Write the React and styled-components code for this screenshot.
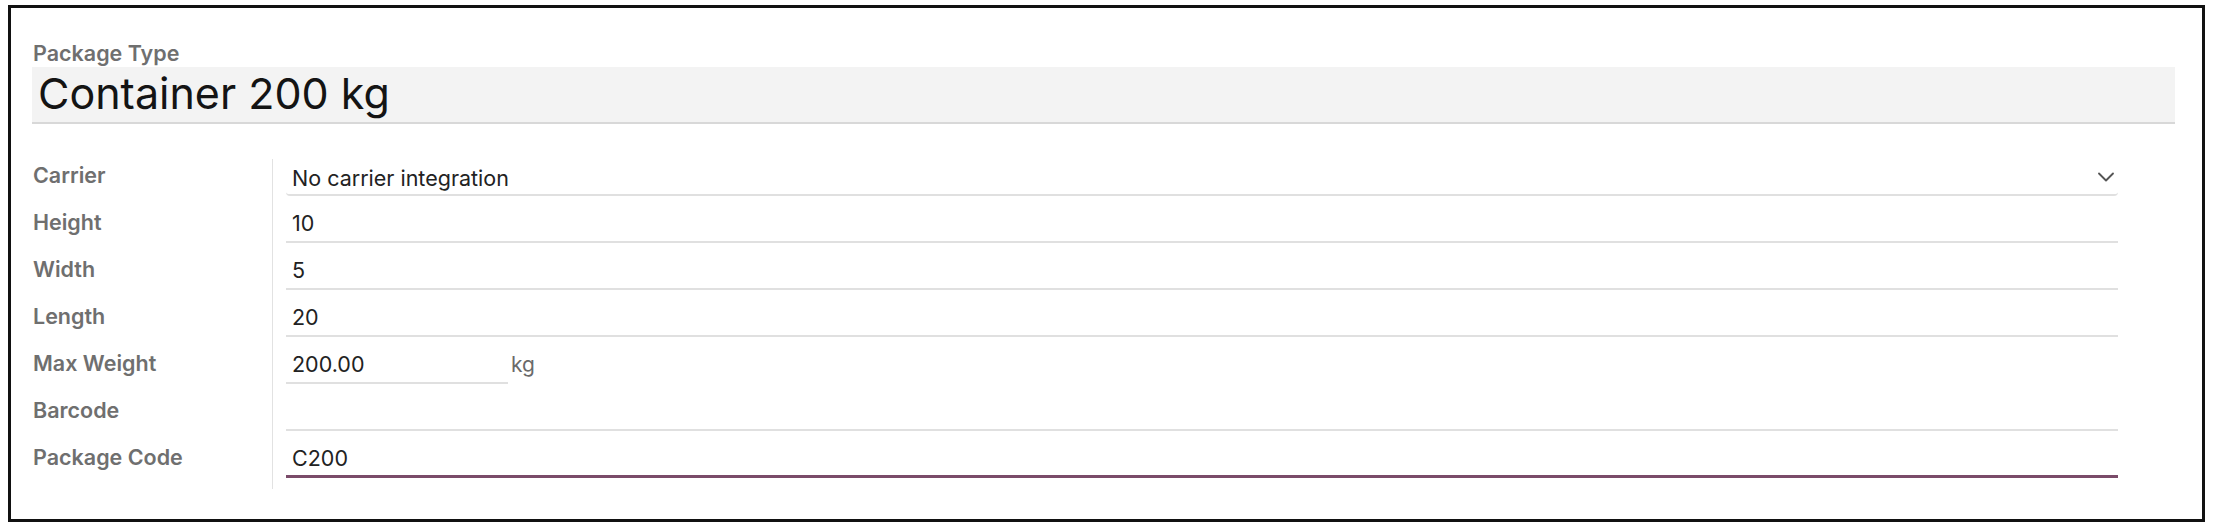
import React from 'react';
import styled, { createGlobalStyle } from 'styled-components';
import { ChevronDown } from 'lucide-react';

const Global = createGlobalStyle`
  body {
    margin: 0;
    background: #ffffff;
    font-family: "Inter", "Noto Sans", sans-serif;
  }
`

const Frame = styled.section`
    box-sizing: border-box;
    height: 517px;
    margin: 5px 13px 10px 8px;
    border: 3px solid #111111;
    padding: 33px 27px 0 21px;
    background: #ffffff;
`

const TitleLabel = styled.div`
    padding-left: 1px;
    margin-bottom: 2px;
    font-size: 21.5px;
    font-weight: 600;
    line-height: 24px;
    color: #6f6f6f;
`

const TitleBox = styled.div`
    box-sizing: border-box;
    height: 57px;
    padding: 0 0 2px 6px;
    background: #f3f3f3;
    border-bottom: 2px solid #d8d8d8;
    font-size: 43px;
    line-height: 53px;
    color: #141414;
`

const Form = styled.div`
    display: grid;
    grid-template-columns: 240px 1fr;
    grid-template-rows: 37px repeat(5, 47px) 58px;
    margin-top: 35px;
`

const Label = styled.div`
    padding-top: ${p => p.$first ? 4 : 14}px;
    padding-left: 1px;
    font-size: 21.5px;
    font-weight: 600;
    line-height: 24px;
    color: #6f6f6f;
`

const Cell = styled.div`
    display: flex;
    align-items: flex-start;
    padding: ${p => p.$first ? 0 : 10}px 57px 0 13px;
    border-left: 1px solid #e2e2e2;
`

const Input = styled.div`
    box-sizing: border-box;
    display: flex;
    align-items: flex-start;
    justify-content: space-between;
    width: ${p => p.$width || '100%'};
    height: 37px;
    padding: ${p => p.$select ? 2 : 0}px 0 0 6px;
    border-bottom: ${p => p.$focused ? '3px solid #7a4b69' : '2px solid #e0e0e0'};
    border-radius: ${p => p.$select ? '0 0 4px 4px' : '0'};
    font-size: 21.5px;
    line-height: 35px;
    color: #222222;
`

const Unit = styled.span`
    margin-left: 3px;
    font-size: 21px;
    line-height: 35px;
    color: #6a6a6a;
`

const Chevron = styled(ChevronDown)`
    flex: none;
    margin: 2px -2px 0 0;
    color: #555555;
`

const rows = [
    { label: 'Carrier', value: 'No carrier integration', select: true },
    { label: 'Height', value: '10' },
    { label: 'Width', value: '5' },
    { label: 'Length', value: '20' },
    { label: 'Max Weight', value: '200.00', width: '222px', unit: 'kg' },
    { label: 'Barcode', value: '' },
    { label: 'Package Code', value: 'C200', focused: true },
];

const App = () => {
    return (
        <>
            <Global />
            <Frame>
                <TitleLabel>Package Type</TitleLabel>
                <TitleBox>Container 200 kg</TitleBox>
                <Form>
                    {rows.map((row, i) => (
                        <React.Fragment key={row.label}>
                            <Label $first={i === 0}>{row.label}</Label>
                            <Cell $first={i === 0}>
                                <Input $select={row.select} $width={row.width} $focused={row.focused}>
                                    <span>{row.value}</span>
                                    {row.select && <Chevron size={28} strokeWidth={1.6} />}
                                </Input>
                                {row.unit && <Unit>{row.unit}</Unit>}
                            </Cell>
                        </React.Fragment>
                    ))}
                </Form>
            </Frame>
        </>
    )
}

export default App;
